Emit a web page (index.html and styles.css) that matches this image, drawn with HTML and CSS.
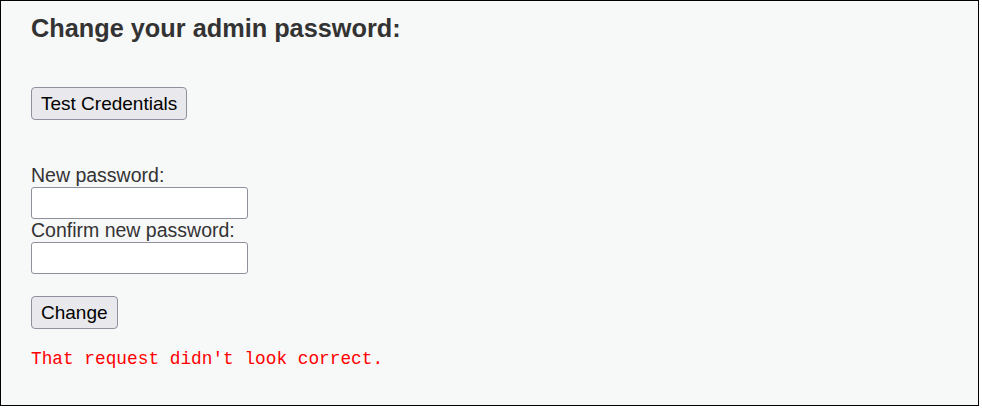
FILE: index.html
```html
<!DOCTYPE html>
<html>
<head>
<meta charset="utf-8">
<link rel="stylesheet" href="styles.css">
</head>
<body>
<div class="panel">
  <h2 class="title">Change your admin password:</h2>
  <div class="test-row"><button class="btn" type="button">Test Credentials</button></div>
  <form class="pw-form">
    <label class="lbl" for="np">New password:</label>
    <input class="field" id="np" type="password">
    <label class="lbl" for="cp">Confirm new password:</label>
    <input class="field" id="cp" type="password">
    <div class="submit-row"><button class="btn" type="button">Change</button></div>
  </form>
  <div class="error">That request didn't look correct.</div>
</div>
</body>
</html>
```
FILE: styles.css
```css
html, body { margin: 0; padding: 0; background: #ffffff; }
body { font-family: "Liberation Sans", Arial, sans-serif; color: #333333; }
.panel {
  height: 404px;
  border: 1px solid #000;
  background: #f7f8f8;
  padding: 0 30px;
  box-sizing: content-box;
  width: 917px;
}
.title { font-size: 25.3px; font-weight: bold; margin: 0; padding-top: 14px; line-height: 26px; }
.test-row { margin-top: 46px; }
.btn {
  font-family: "Liberation Sans", Arial, sans-serif;
  font-size: 19px;
  color: #000;
  background: #e9e9ed;
  border: 1px solid #8f8f9d;
  border-radius: 4px;
  padding: 4px 9px;
  height: 33px;
}
.pw-form { display: flex; flex-direction: column; align-items: flex-start; margin-top: 44px; }
.lbl { font-size: 19.5px; line-height: 23px; }
.field {
  width: 217px; height: 32px; box-sizing: border-box;
  border: 1px solid #8f8f9d; border-radius: 3px; background: #fff; margin: 0;
}
.submit-row { margin-top: 22px; }
.error { color: #ff0000; font-family: "Liberation Mono", monospace; font-size: 17.8px; margin-top: 20px; }
```
